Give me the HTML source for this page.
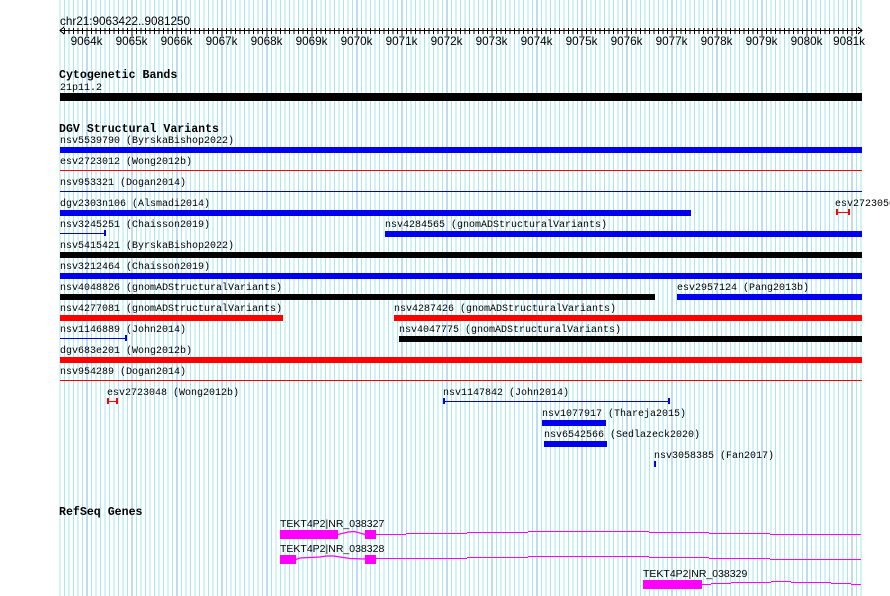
<!DOCTYPE html>
<html><head><meta charset="utf-8"><style>
html,body{margin:0;padding:0;background:#fff;}
svg{display:block;}
.m{font-family:"Liberation Mono",monospace;font-size:10px;fill:#000;}
.h{font-family:"Liberation Mono",monospace;font-size:11.6px;font-weight:bold;fill:#000;}
.s{font-family:"Liberation Sans",sans-serif;font-size:10.5px;fill:#000;}
.a{font-family:"Liberation Sans",sans-serif;font-size:11.7px;fill:#000;}
</style></head><body>
<svg width="890" height="596" viewBox="0 0 890 596" xmlns="http://www.w3.org/2000/svg" shape-rendering="crispEdges">
<defs>
<pattern id="g" patternUnits="userSpaceOnUse" x="41.5" y="0" width="45" height="596">
<rect x="0" y="0" width="1" height="596" fill="#80b8e4"/>
<rect x="4.5" y="0" width="1" height="596" fill="#a6e8ec"/>
<rect x="9" y="0" width="1" height="596" fill="#a6e8ec"/>
<rect x="13.5" y="0" width="1" height="596" fill="#a6e8ec"/>
<rect x="18" y="0" width="1" height="596" fill="#a6e8ec"/>
<rect x="22.5" y="0" width="1" height="596" fill="#a6e8ec"/>
<rect x="27" y="0" width="1" height="596" fill="#a6e8ec"/>
<rect x="31.5" y="0" width="1" height="596" fill="#a6e8ec"/>
<rect x="36" y="0" width="1" height="596" fill="#a6e8ec"/>
<rect x="40.5" y="0" width="1" height="596" fill="#a6e8ec"/>
</pattern>
</defs>
<rect x="57" y="0" width="805" height="596" fill="url(#g)"/>

<!-- axis -->
<text class="a" x="60" y="25">chr21:9063422..9081250</text>
<rect x="60" y="30" width="802" height="1" fill="#000"/>
<path d="M64 27 L60 30.5 L64 34 M858 27 L862 30.5 L858 34" stroke="#000" fill="none"/>
<g class="a" text-anchor="middle">
<text x="86.5" y="45">9064k</text><text x="131.5" y="45">9065k</text><text x="176.5" y="45">9066k</text>
<text x="221.5" y="45">9067k</text><text x="266.5" y="45">9068k</text><text x="311.5" y="45">9069k</text>
<text x="356.5" y="45">9070k</text><text x="401.5" y="45">9071k</text><text x="446.5" y="45">9072k</text>
<text x="491.5" y="45">9073k</text><text x="536.5" y="45">9074k</text><text x="581.5" y="45">9075k</text>
<text x="626.5" y="45">9076k</text><text x="671.5" y="45">9077k</text><text x="716.5" y="45">9078k</text>
<text x="761.5" y="45">9079k</text><text x="806.5" y="45">9080k</text><text x="849" y="45">9081k</text>
</g>

<!-- cytobands -->
<text class="h" x="59" y="78">Cytogenetic Bands</text>
<text class="m" x="60" y="90">21p11.2</text>
<rect x="60" y="93" width="802" height="8" fill="#000"/>

<!-- DGV -->
<text class="h" x="59" y="132">DGV Structural Variants</text>
<g class="m">
<text x="60" y="143">nsv5539790 (ByrskaBishop2022)</text>
<text x="60" y="164">esv2723012 (Wong2012b)</text>
<text x="60" y="185">nsv953321 (Dogan2014)</text>
<text x="60" y="206">dgv2303n106 (Alsmadi2014)</text>
<text x="835" y="206">esv2723050</text>
<text x="60" y="227">nsv3245251 (Chaisson2019)</text>
<text x="385" y="227">nsv4284565 (gnomADStructuralVariants)</text>
<text x="60" y="248">nsv5415421 (ByrskaBishop2022)</text>
<text x="60" y="269">nsv3212464 (Chaisson2019)</text>
<text x="60" y="290">nsv4048826 (gnomADStructuralVariants)</text>
<text x="677" y="290">esv2957124 (Pang2013b)</text>
<text x="60" y="311">nsv4277081 (gnomADStructuralVariants)</text>
<text x="394" y="311">nsv4287426 (gnomADStructuralVariants)</text>
<text x="60" y="332">nsv1146889 (John2014)</text>
<text x="399" y="332">nsv4047775 (gnomADStructuralVariants)</text>
<text x="60" y="353">dgv683e201 (Wong2012b)</text>
<text x="60" y="374">nsv954289 (Dogan2014)</text>
<text x="107" y="395">esv2723048 (Wong2012b)</text>
<text x="443" y="395">nsv1147842 (John2014)</text>
<text x="542" y="416">nsv1077917 (Thareja2015)</text>
<text x="544" y="437">nsv6542566 (Sedlazeck2020)</text>
<text x="654" y="458">nsv3058385 (Fan2017)</text>
</g>
<rect x="60" y="147" width="802" height="6" fill="#0000ee"/>
<rect x="60" y="170" width="802" height="1" fill="#ff0000"/>
<rect x="60" y="191" width="802" height="1" fill="#0000cc"/>
<rect x="60" y="210" width="631" height="6" fill="#0000ee"/>
<rect x="836" y="212" width="14" height="1" fill="#ff0000"/>
<rect x="836" y="209" width="2" height="6" fill="#ff0000"/><rect x="848" y="209" width="2" height="6" fill="#ff0000"/>
<rect x="60" y="233" width="45" height="1" fill="#0000cc"/>
<rect x="104" y="230" width="2" height="6" fill="#0000ee"/>
<rect x="385" y="231" width="477" height="6" fill="#0000ee"/>
<rect x="60" y="252" width="802" height="6" fill="#000"/>
<rect x="60" y="273" width="802" height="6" fill="#0000ee"/>
<rect x="60" y="294" width="595" height="6" fill="#000"/>
<rect x="677" y="294" width="185" height="6" fill="#0000ee"/>
<rect x="60" y="315" width="223" height="6" fill="#ff0000"/>
<rect x="394" y="315" width="468" height="6" fill="#ff0000"/>
<rect x="60" y="338" width="66" height="1" fill="#0000cc"/>
<rect x="125" y="335" width="2" height="6" fill="#0000ee"/>
<rect x="399" y="336" width="463" height="6" fill="#000"/>
<rect x="60" y="357" width="802" height="6" fill="#ff0000"/>
<rect x="60" y="380" width="802" height="1" fill="#ee0000"/>
<rect x="107" y="401" width="11" height="1" fill="#ff0000"/>
<rect x="107" y="398" width="2" height="6" fill="#ff0000"/><rect x="116" y="398" width="2" height="6" fill="#ff0000"/>
<rect x="443" y="401" width="226" height="1" fill="#0000cc"/>
<rect x="443" y="398" width="2" height="6" fill="#0000ee"/><rect x="668" y="398" width="2" height="6" fill="#0000ee"/>
<rect x="542" y="420" width="64" height="6" fill="#0000ee"/>
<rect x="544" y="441" width="63" height="6" fill="#0000ee"/>
<rect x="654" y="461" width="2" height="6" fill="#0000ee"/>

<!-- genes -->
<text class="h" x="59" y="515">RefSeq Genes</text>
<g class="s">
<text x="280" y="527">TEKT4P2|NR_038327</text>
<text x="280" y="552">TEKT4P2|NR_038328</text>
<text x="643" y="577">TEKT4P2|NR_038329</text>
</g>
<g fill="none" stroke="#ff00ff" stroke-width="1.3" shape-rendering="auto">
<polyline points="338,534.5 348,532 354,531.5 358,532.5 365,534.5"/>
<polyline points="296,559.5 300,558 320,557 326,556 334,556 340,557 350,558.5 365,559"/>
</g>
<g fill="#ff00ff">
<rect x="376" y="534" width="30" height="1"/><rect x="406" y="533" width="61" height="1"/><rect x="467" y="532" width="61" height="1"/><rect x="528" y="531" width="121" height="1"/><rect x="649" y="532" width="60" height="1"/><rect x="709" y="533" width="61" height="1"/><rect x="770" y="534" width="60" height="1"/><rect x="830" y="534" width="31" height="1"/>
<rect x="376" y="558" width="30" height="1"/><rect x="406" y="558" width="61" height="1"/><rect x="467" y="557" width="61" height="1"/><rect x="528" y="556" width="121" height="1"/><rect x="649" y="557" width="60" height="1"/><rect x="709" y="558" width="61" height="1"/><rect x="770" y="559" width="60" height="1"/><rect x="830" y="559" width="31" height="1"/>
<rect x="702" y="584" width="9" height="1"/><rect x="711" y="583" width="20" height="1"/><rect x="731" y="582" width="40" height="1"/><rect x="771" y="581" width="20" height="1"/><rect x="791" y="582" width="40" height="1"/><rect x="831" y="583" width="20" height="1"/><rect x="851" y="584" width="10" height="1"/>
</g>
<rect x="280" y="530" width="58" height="9" fill="#ff00ff"/>
<rect x="365" y="530" width="11" height="9" fill="#ff00ff"/>
<rect x="280" y="555" width="16" height="9" fill="#ff00ff"/>
<rect x="365" y="555" width="11" height="9" fill="#ff00ff"/>
<rect x="643" y="580" width="59" height="9" fill="#ff00ff"/>

<!-- axis ticks -->
<g fill="#000">
<rect x="64" y="28" width="1" height="6"/><rect x="68.5" y="28" width="1" height="6"/><rect x="73" y="28" width="1" height="6"/><rect x="77.5" y="28" width="1" height="6"/><rect x="82" y="28" width="1" height="6"/>
</g>
<g id="tk" fill="#000"></g>
</svg>
<script>
var g=document.getElementById('tk');var s='';
for(var i=0;i<175;i++){var x=86.5+i*4.5;if(x>858)break;var major=(i%10==0);
s+='<rect x="'+x+'" y="28" width="1" height="'+(major?8:6)+'"/>';}
g.innerHTML=s;
</script>
</body></html>
